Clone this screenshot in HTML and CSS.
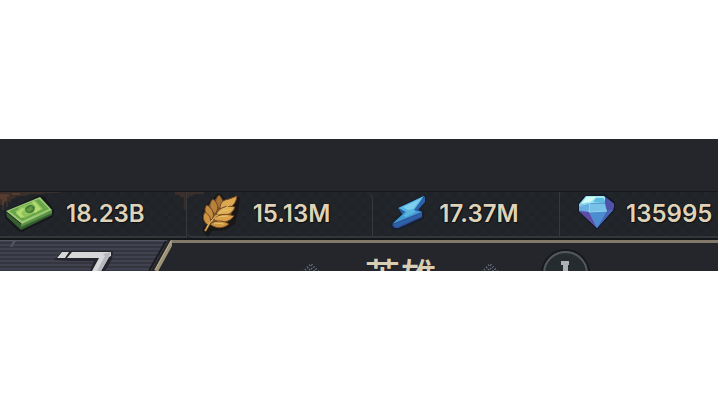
FILE: index.html
```
<!DOCTYPE html>
<html lang="zh-CN">
<head>
  <meta charset="UTF-8">
  <meta name="viewport" content="width=device-width, initial-scale=1">
  <title>英雄</title>
  <link rel="stylesheet" href="styles.css">
</head>
<body>
<main class="Game">
  <div class="Game__Top"></div>

  <ul class="Resources">
    <li class="Resource">
      <svg class="Resource__Rust" viewBox="0 0 187 20" aria-hidden="true">
        <path fill="#3a2f2a" d="M0 0h60v1H46l-3 1H30l-4 2h-9l-3 3h-3v3H8v5H6v-4H4v7H2v-5H0z"/>
        <path fill="#553c2d" d="M0 2h9v3H7v4H4v4H2V7H0zM12 1h8v2h-8z"/>
        <path fill="#3a2f2a" d="M176 0h11v18h-2V5h-4V3h-5z"/>
      </svg>
      <svg class="Resource__Icon" viewBox="0 0 66 46" aria-hidden="true">
        <path fill="#15191b" d="M5 20 40 4l5 2 9 13-1 7-31 15-4-1L5 27z"/>
        <path fill="#365f30" d="m6 21 15 12 31-14v5L21 39 7 26z"/>
        <path fill="#579044" d="m21 33 31-14v3L21 36z"/>
        <path fill="#9bc873" d="M6 20 40 6l12 13-30 14z"/>
        <path fill="#69a34a" d="m9 20 30-12 10 10-27 12z"/>
        <path fill="#8fc45d" d="m15 20 4-2-1-1 18-7 7 8-19 9-6-3z"/>
        <path fill="#b5da72" d="m16 22 6-5 3 1-4 4 3 4-3 1zM34 10l7 8-6 4-3-2 4-4-4-5z"/>
        <ellipse cx="30" cy="18" rx="5" ry="4" transform="rotate(-20 30 18)" fill="#447d37"/>
        <path fill="#649b42" d="m26 19 5-4 2 3-4 3z"/>
      </svg>
      <span class="Resource__Value">18.23B</span>
    </li>
    <li class="Resource">
      <svg class="Resource__Rust" viewBox="0 0 187 20" aria-hidden="true">
        <path fill="#3a2f2a" d="M0 0h17v2H8l-3 2H2v2H0z"/>
      </svg>
      <svg class="Resource__Icon" viewBox="0 0 66 46" aria-hidden="true">
        <path fill="#1a1717" d="m17 42-2-3 3-5-3-6 1-9 5-7 9-9h4l5 6 11-4 3 2-2 13-3 13-9 6-14 1-4 6z"/>
        <path fill="#8a5c2c" d="m21 34-4-7 1-6 4-7 10-9 4 6 11-3-2 11-2 10-9 5z"/>
        <path fill="none" stroke="#cf9442" stroke-width="2" d="m18 40 6-10L42 13"/>
        <g stroke="#6b4625" stroke-width="1" stroke-linejoin="round">
          <path fill="#a87336" d="M32 18c-5-6-4-10 0-14 5 5 5 10 0 14z"/>
          <path fill="#b9803a" d="M28 23c-7-6-6-11-2-15 6 5 6 10 2 15z"/>
          <path fill="#c68d40" d="M25 29c-7-5-9-11-5-15 6 4 8 9 5 15z"/>
          <path fill="#cf9442" d="M22 35c-6-4-7-9-4-14 6 4 7 9 4 14z"/>
          <path fill="#dba850" d="M33 18c0-7 3-9 9-10l8-3c-1 9-7 14-17 13z"/>
          <path fill="#dfaf56" d="M29 23c4-7 11-9 19-7-3 8-10 10-19 7z"/>
          <path fill="#d9a14a" d="M26 28c6-5 13-6 21-3-5 7-14 8-21 3z"/>
          <path fill="#d09743" d="M23 33c6-4 13-4 19 0-6 5-13 5-19 0z"/>
        </g>
        <path fill="none" stroke="#e8c06a" d="m20 36 5-7 17-15M36 20l8-2M31 26l10-1M27 32l10 1"/>
      </svg>
      <span class="Resource__Value">15.13M</span>
    </li>
    <li class="Resource">
      <svg class="Resource__Icon" viewBox="0 0 66 46" aria-hidden="true">
        <path fill="#344b91" stroke="#14202f" stroke-width="2" stroke-linejoin="round" d="M52 5 25 17l5 5-12 12 3 4h5l24-11v-7l-4-2 6-7z"/>
        <path fill="#2c62aa" d="M52 5v6l-7 8-4-1zM25 17l7 5 3 1-5 1zM19 34l30-12v3L24 36z"/>
        <path fill="#419bd3" d="m19 33 13-12-7-4 26-12-10 14 8 2z"/>
        <path fill="#5bb5e1" d="m26 17 25-12-10 14 2 2-10 5-3-1 4-4z"/>
        <path fill="#7dcfeb" d="m30 16 19-9-9 11-5 1z"/>
      </svg>
      <span class="Resource__Value">17.37M</span>
    </li>
    <li class="Resource">
      <svg class="Resource__Icon" viewBox="0 0 66 46" aria-hidden="true">
        <path fill="#15192a" d="m25 4 20-1 10 8v8L37 39 18 21v-9z"/>
        <path fill="#559bd7" d="m26 5 18 0 10 8-1 6-16 18-18-17v-7z"/>
        <path fill="#a2e9ee" d="m26 5 18 0 3 6-16 1-12 2z"/>
        <path fill="#d3faf5" d="m27 6 9 0-6 5-8 1z"/>
        <path fill="#5cbbe1" d="m33 11 3-4h7l3 4z"/>
        <path fill="#68aee0" d="m19 14 11-2-1 9-10-2z"/>
        <path fill="#78c2e8" d="M30 13h15l2 7-18 1z"/>
        <path fill="#5051a9" d="m45 6 9 7-1 6-6 1-2-8z"/>
        <path fill="#5f4ba5" d="m19 20 10 1 8 16z"/>
        <path fill="#4c8dd0" d="m29 21 18-1-10 17z"/>
        <path fill="#4663b4" d="m47 20 6-1-16 18z"/>
        <path fill="none" stroke="#93d4ee" d="m19 15 11-3-1 9 18-1"/>
      </svg>
      <span class="Resource__Value">135995</span>
    </li>
  </ul>

  <div class="Heading">
    <div class="Heading__Banner">
      <svg class="Heading__Emblem" viewBox="0 0 172 31" aria-hidden="true">
        <defs>
          <pattern id="stripes" width="4" height="4" patternUnits="userSpaceOnUse">
            <path fill="#41424f" d="M0 0h4v4H0z"/>
            <path fill="#34353f" d="M0 2h4v2H0z"/>
          </pattern>
        </defs>
        <path fill="url(#stripes)" d="M0 1h168l-17 30H0z"/>
        <path fill="#555663" d="M0 0h167v1H16l-4 6h-2l3-6H0z"/>
        <path fill="#24252d" d="M54 20 62 11h51l-1 8-7 12H90l4-10H72z"/>
        <path fill="#d7d7d9" d="m57 18 5-6h7l-4 6zM72 12h39v4l-2 1-8 14h-9l7-13H67z"/>
        <path fill="#b7b8bd" d="m103 14 8-2-2 5-8 14h-4l8-15z"/>
        <path fill="none" stroke="#1b1c22" stroke-width="2" d="m166 1-17 30"/>
        <path fill="none" stroke="#9c9277" stroke-width="4" d="m173 0-17 31"/>
        <path fill="none" stroke="#b8ad8a" stroke-width="1" d="m171 1-16 29"/>
      </svg>
    </div>
    <div class="Heading__Panel">
      <svg class="Heading__Ornament" viewBox="0 0 18 9" aria-hidden="true">
        <path fill="none" stroke="#737b8c" stroke-width="2" stroke-dasharray="1 2" d="m1 9 8-8 8 8M5 9l4-4 4 4"/>
      </svg>
      <h1 class="Heading__Title">英雄</h1>
      <svg class="Heading__Ornament" viewBox="0 0 18 9" aria-hidden="true">
        <path fill="none" stroke="#737b8c" stroke-width="2" stroke-dasharray="1 2" d="m1 9 8-8 8 8M5 9l4-4 4 4"/>
      </svg>
      <button class="Heading__Info" type="button" aria-label="说明">
        <svg class="Heading__InfoIcon" viewBox="0 0 8 20" aria-hidden="true">
          <path fill="#adb1b5" d="M0 0h8v4H7v10H2V4H0z"/>
        </svg>
      </button>
    </div>
  </div>
</main>
</body>
</html>
```
FILE: styles.css
```
html, body {
  margin: 0;
  padding: 0;
  background-color: #ffffff;
}

body {
  padding-top: 139px;
  font-family: Inter, "Noto Sans CJK SC", sans-serif;
}

.Game {
  margin-right: 2px;
  background-color: #24262b;
  overflow: hidden;
}

.Game__Top {
  height: 52px;
}

.Resources {
  display: grid;
  grid-template-columns: 26% 26% 26% 1fr;
  margin: 0;
  padding: 0;
  list-style: none;
  border-top: 1px solid #15171b;
  border-bottom: 2px solid #15171b;
}

.Resource {
  position: relative;
  display: flex;
  align-items: center;
  height: 46px;
  box-sizing: border-box;
  border-right: 1px solid #373a3d;
  border-bottom: 2px solid #32373a;
  background-color: #22262b;
  background-image:
    linear-gradient(45deg, #202429 25%, transparent 25%, transparent 75%, #202429 75%),
    linear-gradient(45deg, #202429 25%, transparent 25%, transparent 75%, #202429 75%);
  background-position: 0 0, 6px 6px;
  background-size: 12px 12px;
}

.Resource:last-child {
  border-right: 0;
}

.Resource:nth-child(2) {
  border-top-right-radius: 8px;
  border-bottom-left-radius: 6px;
}

.Resource__Rust {
  position: absolute;
  top: 0;
  left: 0;
  width: 100%;
  height: 20px;
}

.Resource__Icon {
  position: relative;
  flex: none;
  width: 66px;
  height: 46px;
}

.Resource__Value {
  font-size: 24px;
  line-height: 28px;
  font-weight: 600;
  color: #ded2b8;
  text-shadow: 1px 1px 1px #0e0f11, -1px 0 1px #0e0f11;
}

.Heading {
  display: flex;
  height: 31px;
  overflow: hidden;
}

.Heading__Banner {
  flex: none;
  width: 172px;
}

.Heading__Emblem {
  display: block;
  width: 100%;
  height: 31px;
}

.Heading__Panel {
  flex: 1;
  display: flex;
  justify-content: center;
  align-items: flex-start;
  gap: 44px;
  border-top: 3px solid #82796a;
}

.Heading__Ornament {
  width: 18px;
  height: 9px;
  margin-top: 20px;
}

.Heading__Title {
  margin: 12px 0 0;
  font-size: 36px;
  line-height: 44px;
  font-weight: 500;
  color: #d8ceb3;
}

.Heading__Info {
  width: 45px;
  height: 45px;
  margin-top: 8px;
  padding: 8px 0 0;
  display: flex;
  justify-content: center;
  align-items: flex-start;
  border: 2px solid #54585c;
  border-radius: 50%;
  background-color: #252c30;
  box-shadow: 0 0 0 2px #17191c;
}

.Heading__InfoIcon {
  width: 8px;
  height: 20px;
}
```
